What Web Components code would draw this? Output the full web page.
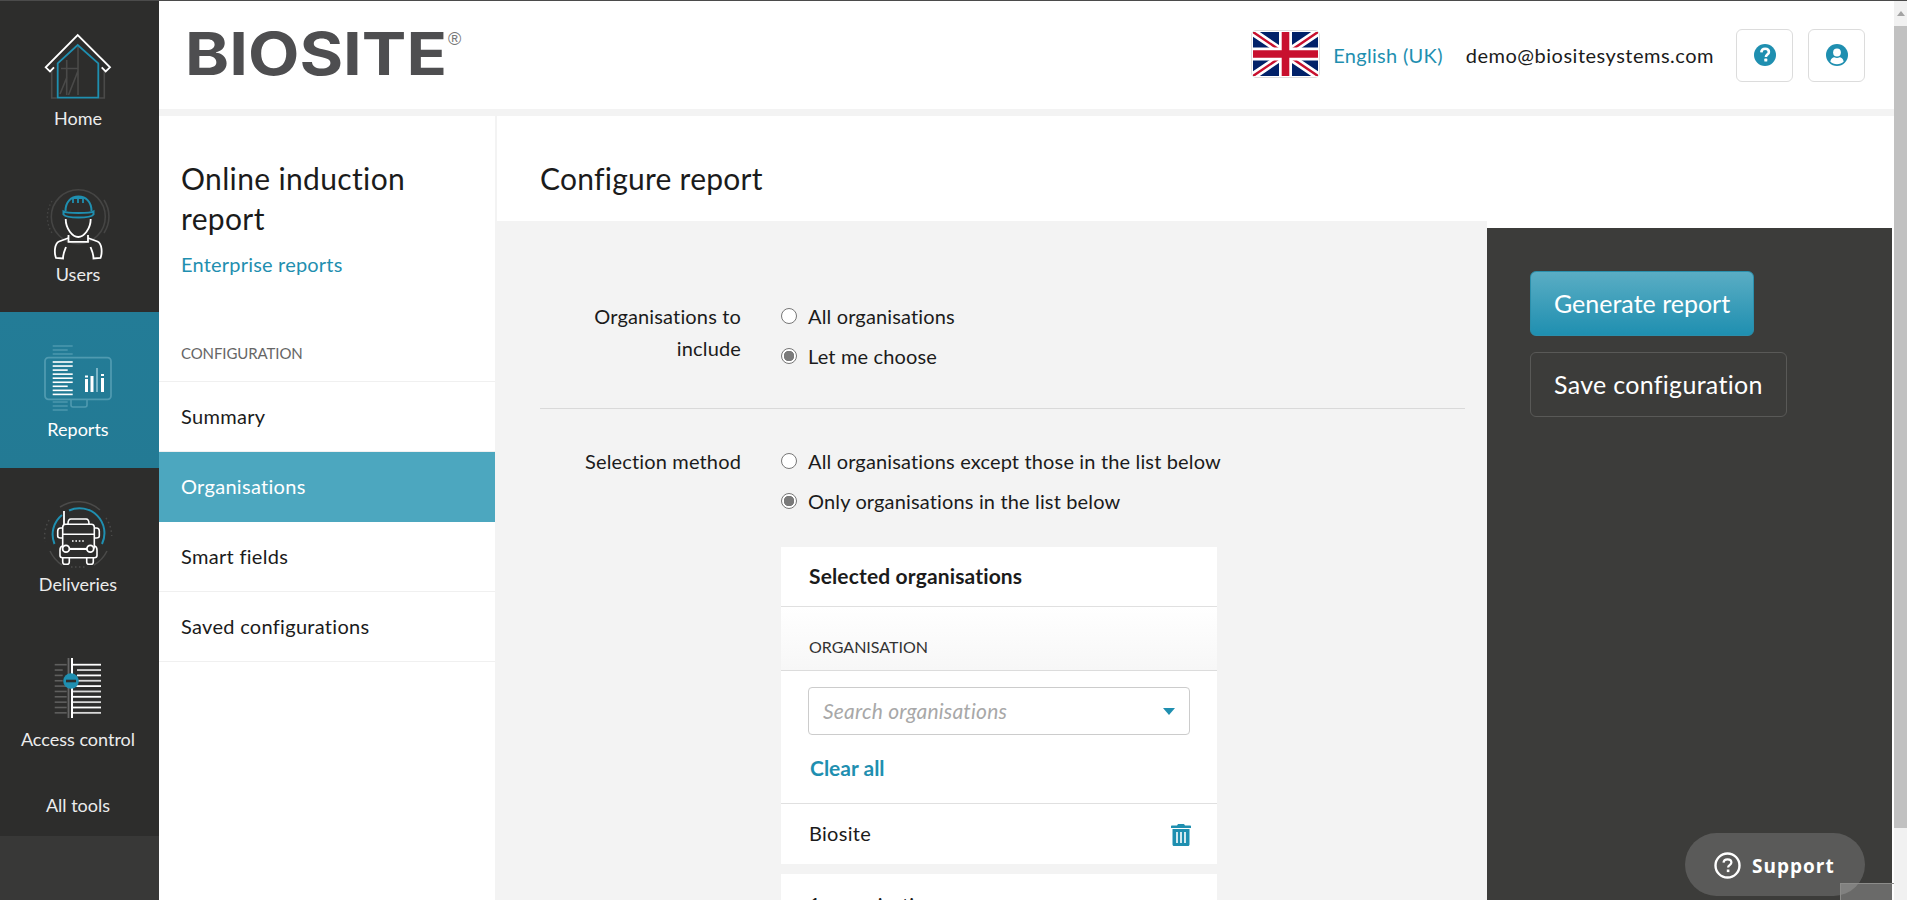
<!DOCTYPE html>
<html lang="en">
<head>
<meta charset="utf-8">
<title>Configure report</title>
<style>
  html, body { margin: 0; height: 100%; overflow: hidden; }
  body { font-family: Lato, "Noto Sans", sans-serif; color: #1b1b1b; background: #f3f3f3; }
</style>
</head>
<body>
<app-shell>
  <side-rail slot="rail">
    <rail-item label="Home" icon="home" size="155"></rail-item>
    <rail-item label="Users" icon="users"></rail-item>
    <rail-item label="Reports" icon="reports" active></rail-item>
    <rail-item label="Deliveries" icon="deliveries"></rail-item>
    <rail-item label="Access control" icon="access"></rail-item>
    <rail-item label="All tools" size="56"></rail-item>
  </side-rail>
  <top-bar slot="top"></top-bar>
  <sub-nav slot="nav" heading="Online induction report" crumb="Enterprise reports" section="CONFIGURATION">
    <nav-row>Summary</nav-row>
    <nav-row active>Organisations</nav-row>
    <nav-row>Smart fields</nav-row>
    <nav-row>Saved configurations</nav-row>
  </sub-nav>
  <page-title slot="title">Configure report</page-title>
  <config-form slot="form">
    <config-row label="Organisations to include" divided>
      <radio-option>All organisations</radio-option>
      <radio-option checked>Let me choose</radio-option>
    </config-row>
    <config-row label="Selection method">
      <radio-option>All organisations except those in the list below</radio-option>
      <radio-option checked>Only organisations in the list below</radio-option>
      <selected-panel></selected-panel>
      <count-row>1 organisation</count-row>
    </config-row>
  </config-form>
  <action-panel slot="actions">
    <action-button primary>Generate report</action-button>
    <action-button>Save configuration</action-button>
  </action-panel>
  <fake-scrollbar slot="scroll"></fake-scrollbar>
</app-shell>
<support-pill></support-pill>
<corner-box></corner-box>

<script>
const TEAL = "#1f8fb0";
const FONT_W = "#ffffff";
const range = (n, fn) => Array.from({ length: n }, (_, i) => fn(i)).join("");

const ICONS = {
  home: `
    <g fill="none" stroke="#4a4a49" stroke-width="1.6">
      <path d="M9.7 41v27h5M62.3 41v27h-5"/>
      <path d="M36 17v48M24.7 30v35M19 38.5h17M18 64l7-17M26.5 65L36 41"/>
    </g>
    <path d="M15.7 33.3L35.7 15l20.6 18.3v34.4H15.7z" fill="none" stroke="${TEAL}" stroke-width="1.8"/>
    <path d="M12 37.3L8 41.4 3.7 37.3 35.7 5 68 37.3l-4.3 4.1-4-4.1" fill="none" stroke="${FONT_W}" stroke-width="1.8"/>`,
  users: `
    <circle cx="36.3" cy="31.7" r="27" fill="none" stroke="#454544" stroke-width="1.6"/>
    <path d="M62 15a30 30 0 0 1 0 33" fill="none" stroke="#454544" stroke-width="1.6"/>
    <path d="M10 16a30 30 0 0 0 0 32" fill="none" stroke="#454544" stroke-width="1.4" stroke-dasharray="1.5 2.5"/>
    <path d="M23.5 26c0-9 5.5-14.5 13-14.5S49.500 17 49.500 26" fill="none" stroke="${TEAL}" stroke-width="2"/>
    <path d="M31 18v-5h10v5M36 13v5" fill="none" stroke="${TEAL}" stroke-width="1.8"/>
    <path d="M21.500 26.500c3 2 27 2 30 0v3c-3 4-27 4-30 0z" fill="none" stroke="${TEAL}" stroke-width="2"/>
    <g fill="none" stroke="#fff" stroke-width="1.8">
      <path d="M23.700 34c0 10 7 18 12.500 18s12.500-8 12.500-18"/>
      <path d="M26.500 50v6.800h19.500V50"/>
      <path d="M26.500 53l-9.500 3.500c-4.500 2-5 11-3 16.500l7 .5c0-5 2-9 3-11.500"/>
      <path d="M46 53l9.500 3.500c4.500 2 5 11 3 16.500l-7 .5c0-5-2-9-3-11.500"/>
    </g>`,
  reports: `
    <rect x="3" y="16.700" width="66" height="41.600" rx="3.500" fill="none" stroke="#4f9ab0" stroke-width="1.8"/>
    <path d="M29 59v5c0 1.500 1 2 2 2h12c1 0 2-.5 2-2v-5" fill="none" stroke="#4f9ab0" stroke-width="1.600"/>
    ${[5, 9, 13].map((y, i) => `<rect x="10.700" y="${y - 0.7}" width="${i == 1 ? 15 : 20}" height="1.400" fill="#4f9ab0"/>`).join("")}
    ${[61, 65, 69].map(y => `<rect x="10.700" y="${y - 0.7}" width="15" height="1.400" fill="#4f9ab0"/>`).join("")}
    ${range(9, i => `<rect x="10.700" y="${20.200 + i * 4.050}" width="${i % 2 ? 20 : (i % 4 ? 15 : 20)}" height="1.600" fill="#fff"/>`)}
    <rect x="43" y="38" width="3" height="13" fill="#fff"/><rect x="43" y="34.500" width="3" height="2" fill="#fff"/>
    <rect x="48.500" y="35" width="3" height="16" fill="#fff"/>
    <rect x="54.200" y="27" width="1.600" height="24" fill="#8fc3d3"/>
    <rect x="59" y="37" width="3" height="14" fill="#fff"/><rect x="59" y="33" width="3" height="2" fill="#fff"/>`,
  deliveries: `
    <g fill="none" stroke="#4a4a49" stroke-width="1.500">
      <path d="M18 9A33.500 33.500 0 0 1 58 12"/>
      <path d="M64 20A33.500 33.500 0 0 1 69.700 38" stroke-dasharray="1.500 3"/>
      <path d="M7 22A33.500 33.500 0 0 0 3 44" stroke-dasharray="1.500 3"/>
      <path d="M8 53A33.500 33.500 0 0 0 20 67M52 67A33.500 33.500 0 0 0 65 53"/>
      <path d="M29 69h14" stroke-dasharray="1.500 2.500"/>
    </g>
    <path d="M12.500 46A25 25 0 0 1 20 17M27 12.500A25 25 0 0 1 60 46" fill="none" stroke="${TEAL}" stroke-width="2"/>
    <g fill="none" stroke="#fff" stroke-width="1.600">
      <path d="M22 13v23" stroke-width="1.800"/>
      <path d="M26 26c0-3 1-5 3-5h15c2 0 3 2 3 5"/>
      <rect x="20.700" y="26.300" width="31.600" height="25" rx="3" fill="#2d2d2c"/>
      <path d="M20.700 36.300h31.600"/>
      <path d="M20.700 30h-2c-2 0-3 1-3 3v5c0 1.500 1 2 3 2h2M52.300 30h2c2 0 3 1 3 3v5c0 1.500-1 2-3 2h-2"/>
      <path d="M20.700 48c-2 .5-2.700 2-2.700 4v5.500c0 1.500 1 2.200 2.500 2.200h32c1.500 0 2.500-.7 2.500-2.200V52c0-2-.7-3.500-2.700-4"/>
      <circle cx="24" cy="50.700" r="3.400" fill="#2d2d2c" stroke-width="1.800"/><circle cx="48.300" cy="50.700" r="3.400" fill="#2d2d2c" stroke-width="1.800"/>
      <path d="M27.500 50.700h17.500"/>
      <path d="M20.700 60v4c0 1.300 1 2.300 2.300 2.300h2c1.300 0 2.300-1 2.300-2.300v-4M44.700 60v4c0 1.300 1 2.300 2.300 2.300h2c1.300 0 2.300-1 2.300-2.300v-4"/>
    </g>
    <path d="M30 43h13" stroke="#fff" stroke-width="1.500" stroke-dasharray="1.600 1.800" fill="none"/>`,
  access: `
    <rect x="25.600" y="7" width="1.800" height="60" fill="#666"/>
    <rect x="29" y="7" width="2" height="60" fill="#fff"/>
    ${range(10, i => {
      const y = 13.700 + i * 5.350;
      const nearDot = i > 0 && i < 4;
      return `<rect x="12.700" y="${y - 0.8}" width="${nearDot ? 8 : 12}" height="1.600" fill="#5f5f5e"/>
        <rect x="${nearDot ? 35 : 31}" y="${y - 0.9}" width="${nearDot ? 24 : 28}" height="1.800" fill="${i % 2 ? "#d8d8d8" : "#fff"}"/>`;
    })}
    <circle cx="29" cy="30" r="7.800" fill="${TEAL}"/>
    <rect x="24" y="28.700" width="10" height="2.600" fill="#2d2d2c"/>`
};

class AppShell extends HTMLElement {
  constructor() {
    super();
    this.attachShadow({ mode: "open" });
    this.shadowRoot.innerHTML = `
    <style>
      :host {
        display: grid;
        grid-template-columns: 159px minmax(0, 1fr) 13px;
        height: 900px;
        box-sizing: border-box;
        border-top: 1px solid #4b4b4b;
        overflow: hidden;
      }
      .content {
        display: grid;
        grid-template-rows: 108px minmax(0, 1fr);
        row-gap: 7px;
        background: #f3f3f3;
        min-height: 0;
      }
      .lower {
        display: grid;
        grid-template-columns: 336px minmax(0, 1fr);
        column-gap: 2px;
        min-height: 0;
      }
      .main {
        display: grid;
        grid-template-rows: 105px minmax(0, 1fr);
        min-height: 0;
      }
      .work {
        display: grid;
        grid-template-columns: 990px 405px;
        background: linear-gradient(#f3f3f3, #f3f3f3) left/990px 100% no-repeat, #fff;
        min-height: 0;
        overflow: hidden;
      }
    </style>
    <slot name="rail"></slot>
    <div class="content">
      <slot name="top"></slot>
      <div class="lower">
        <slot name="nav"></slot>
        <div class="main">
          <slot name="title"></slot>
          <div class="work">
            <slot name="form"></slot>
            <slot name="actions"></slot>
          </div>
        </div>
      </div>
    </div>
    <slot name="scroll"></slot>
    `;
  }
}

class SideRail extends HTMLElement {
  constructor() {
    super();
    this.attachShadow({ mode: "open" });
    this.shadowRoot.innerHTML = `
    <style>
      :host { display: block; background: #383837; height: 100%; }
      .items { display: flex; flex-direction: column; background: #2d2d2c; }
    </style>
    <div class="items"><slot></slot></div>
    `;
  }
}

class RailItem extends HTMLElement {
  constructor() {
    super();
    const icon = this.getAttribute("icon");
    const size = this.getAttribute("size") || 156;
    const tops = { home: 29, users: 29, reports: 29, deliveries: 30, access: 27 };
    const gaps = { home: 0, users: 1, reports: 0, deliveries: -2, access: 0 };
    const art = icon ? `<svg width="72" height="76" viewBox="0 0 72 76">${ICONS[icon]}</svg>` : "";
    this.attachShadow({ mode: "open" });
    this.shadowRoot.innerHTML = `
    <style>
      :host {
        display: flex;
        flex-direction: column;
        align-items: center;
        height: ${size}px;
        padding: ${icon ? tops[icon] : 13}px 3px 0 0;
        box-sizing: border-box;
        color: #ececec;
        font-size: 18px;
      }
      :host([active]) { background: linear-gradient(#237c97, #237a94); color: #fff; }
      svg { display: block; height: 76px; }
      span { display: block; line-height: 24px; white-space: nowrap; margin-top: ${icon ? gaps[icon] : 0}px; }
    </style>
    ${art}
    <span>${this.getAttribute("label")}</span>
    `;
  }
}

class TopBar extends HTMLElement {
  constructor() {
    super();
    this.attachShadow({ mode: "open" });
    this.shadowRoot.innerHTML = `
    <style>
      :host {
        display: flex;
        align-items: center;
        background: #fff;
        padding: 0 29px;
        font-size: 20px;
      }
      .logo { display: block; margin-right: auto; overflow: visible; }
      .flag {
        display: block;
        width: 69px;
        height: 48px;
        box-sizing: border-box;
        border: 1px solid #ddd;
        border-radius: 5px;
        padding: 1px;
        margin-right: 13px;
        margin-top: -2px;
      }
      .flag svg { display: block; width: 100%; height: 100%; }
      .lang { color: ${TEAL}; margin-right: 23px; letter-spacing: .3px; }
      .mail { margin-right: 22px; letter-spacing: .5px; }
      .square {
        display: grid;
        place-items: center;
        width: 57px;
        height: 53px;
        box-sizing: border-box;
        border: 1px solid #dcdcdc;
        border-radius: 6px;
      }
      .square + .square { margin-left: 15px; }
    </style>
    <svg class="logo" width="285" height="60" viewBox="0 0 285 60">
      <text x="-3" y="50" font-family="Inter" font-weight="700" font-size="59" fill="#4e4e50" textLength="262" lengthAdjust="spacingAndGlyphs">BIOSITE</text>
      <text x="260" y="20" font-family="Liberation Sans" font-size="18" fill="#777">®</text>
    </svg>
    <span class="flag">
      <svg viewBox="0 0 60 40" preserveAspectRatio="none">
        <rect width="60" height="40" fill="#012169"/>
        <path d="M0 0L60 40M60 0L0 40" stroke="#fff" stroke-width="7"/>
        <path d="M0 0L60 40M60 0L0 40" stroke="#c8102e" stroke-width="2.200"/>
        <path d="M30 0v40M0 20h60" stroke="#fff" stroke-width="12"/>
        <path d="M30 0v40M0 20h60" stroke="#c8102e" stroke-width="7"/>
      </svg>
    </span>
    <span class="lang">English (UK)</span>
    <span class="mail">demo@biositesystems.com</span>
    <span class="square">
      <svg width="22" height="22" viewBox="0 0 22 22">
        <circle cx="11" cy="11" r="11" fill="${TEAL}"/>
        <path d="M7.300 8.300C7.500 5.900 9.100 4.700 11.100 4.700c2.200 0 3.800 1.300 3.800 3.200 0 2.600-3 2.700-3 5" fill="none" stroke="#fff" stroke-width="2.600"/>
        <rect x="10.300" y="14.600" width="3" height="3" rx=".6" fill="#fff"/>
      </svg>
    </span>
    <span class="square">
      <svg width="22" height="22" viewBox="0 0 22 22">
        <circle cx="11" cy="11" r="11" fill="${TEAL}"/>
        <circle cx="11" cy="8.500" r="3.900" fill="#fff"/>
        <path d="M4.300 17.400c.6-3 2.700-4.200 4-4.200 1 .5 1.800.8 2.700.8s1.700-.3 2.700-.8c1.300 0 3.400 1.200 4 4.200-1.600 1.700-4 2.800-6.700 2.800s-5.100-1.100-6.700-2.800z" fill="#fff"/>
      </svg>
    </span>
    `;
  }
}

class SubNav extends HTMLElement {
  constructor() {
    super();
    this.attachShadow({ mode: "open" });
    this.shadowRoot.innerHTML = `
    <style>
      :host { display: block; background: #fff; }
      .head { padding: 42px 22px 0; height: 222px; box-sizing: border-box; }
      h1 { margin: 0; font-size: 30px; font-weight: 400; line-height: 40px; letter-spacing: .35px; }
      .crumb { color: ${TEAL}; font-size: 20px; line-height: 28px; margin-top: 12px; letter-spacing: .2px; }
      .section {
        color: #666;
        font-size: 15px;
        letter-spacing: -.1px;
        line-height: 20px;
        padding: 48px 22px 0;
        height: 38px;
        margin-top: -43px;
        position: relative;
      }
      .rows { border-top: 1px solid #f0f0f0; }
    </style>
    <div class="head">
      <h1>${this.getAttribute("heading")}</h1>
      <div class="crumb">${this.getAttribute("crumb")}</div>
    </div>
    <div class="section">${this.getAttribute("section")}</div>
    <div class="rows"><slot></slot></div>
    `;
  }
}

class NavRow extends HTMLElement {
  constructor() {
    super();
    this.attachShadow({ mode: "open" });
    this.shadowRoot.innerHTML = `
    <style>
      :host {
        display: flex;
        align-items: center;
        height: 70px;
        box-sizing: border-box;
        padding: 0 22px 2px;
        font-size: 20px;
        letter-spacing: .3px;
        border-bottom: 1px solid #f0f0f0;
      }
      :host([active]) { background: #4ca7bf; color: #fff; border-bottom-color: #4ca7bf; }
    </style>
    <slot></slot>
    `;
  }
}

class PageTitle extends HTMLElement {
  constructor() {
    super();
    this.attachShadow({ mode: "open" });
    this.shadowRoot.innerHTML = `
    <style>
      :host {
        display: flex;
        align-items: center;
        background: #fff;
        padding: 19px 43px 0;
        font-size: 30px;
        letter-spacing: .25px;
      }
    </style>
    <slot></slot>
    `;
  }
}

class ConfigForm extends HTMLElement {
  constructor() {
    super();
    this.attachShadow({ mode: "open" });
    this.shadowRoot.innerHTML = `
    <style>
      :host { display: block; padding: 75px 22px 0 43px; overflow: hidden; }
    </style>
    <slot></slot>
    `;
  }
}

class ConfigRow extends HTMLElement {
  constructor() {
    super();
    this.attachShadow({ mode: "open" });
    this.shadowRoot.innerHTML = `
    <style>
      :host {
        display: grid;
        grid-template-columns: 201px 436px;
        column-gap: 40px;
        font-size: 20px;
        letter-spacing: .15px;
      }
      :host([divided]) { border-bottom: 1px solid #d9d9d9; padding-bottom: 32px; margin-bottom: 32px; }
      .label { text-align: right; line-height: 32px; padding-top: 4px; }
    </style>
    <div class="label">${this.getAttribute("label")}</div>
    <div><slot></slot></div>
    `;
  }
}

class RadioOption extends HTMLElement {
  constructor() {
    super();
    this.attachShadow({ mode: "open" });
    this.shadowRoot.innerHTML = `
    <style>
      :host { display: flex; align-items: center; height: 40px; white-space: nowrap; }
      .dot {
        width: 16px;
        height: 16px;
        box-sizing: border-box;
        border: 1px solid #767676;
        border-radius: 50%;
        background: #fff;
        margin-right: 11px;
        flex: none;
      }
      .text { padding-bottom: 1px; }
      :host([checked]) .dot { background: radial-gradient(circle, #7a7a7a 0 5px, #fff 5.500px); }
    </style>
    <span class="dot"></span><span class="text"><slot></slot></span>
    `;
  }
}

class SelectedPanel extends HTMLElement {
  constructor() {
    super();
    this.attachShadow({ mode: "open" });
    this.shadowRoot.innerHTML = `
    <style>
      :host { display: block; background: #fff; margin-top: 26px; }
      .head { height: 60px; box-sizing: border-box; border-bottom: 1px solid #e0e0e0; padding: 0 28px 2px; display: flex; align-items: center; font-weight: 700; font-size: 21px; letter-spacing: .15px; }
      .col {
        height: 64px;
        box-sizing: border-box;
        border-bottom: 1px solid #dcdcdc;
        background: linear-gradient(#fff, #f7f7f7);
        padding: 30px 28px 0;
        font-size: 16px;
        letter-spacing: 0;
        line-height: 20px;
        color: #333;
      }
      .body { height: 133px; box-sizing: border-box; border-bottom: 1px solid #e0e0e0; padding: 16px 27px 0; }
      .search {
        display: flex;
        align-items: center;
        justify-content: space-between;
        height: 48px;
        width: 382px;
        box-sizing: border-box;
        border: 1px solid #ccc;
        border-radius: 4px;
        padding: 0 14px 1px;
        color: #a8a8a8;
        font-style: italic;
        font-size: 21px;
        letter-spacing: .2px;
      }
      .arrow { width: 0; height: 0; border: 6.500px solid transparent; border-top: 7px solid ${TEAL}; border-bottom: 0; margin-top: 1px; }
      .clear { color: ${TEAL}; font-weight: 700; font-size: 21px; letter-spacing: 0; line-height: 28px; margin: 19px 0 0 2px; }
      .item { height: 60px; display: flex; align-items: center; justify-content: space-between; padding: 0 26px 0 28px; font-size: 20px; letter-spacing: .3px; }
      .item svg { margin-top: 2px; }
      .name { padding-bottom: 2px; }
    </style>
    <div class="head">Selected organisations</div>
    <div class="col">ORGANISATION</div>
    <div class="body">
      <div class="search">Search organisations<span class="arrow"></span></div>
      <div class="clear">Clear all</div>
    </div>
    <div class="item"><span class="name">Biosite</span>
      <svg width="20" height="22" viewBox="0 0 20 22">
        <path d="M7 0h6l1 1.500h5c.6 0 1 .4 1 1V4H0V2.500c0-.6.400-1 1-1h5z" fill="${TEAL}"/>
        <path d="M1.500 5h17v15.500c0 .9-.6 1.500-1.500 1.500H3c-.9 0-1.500-.6-1.500-1.500z" fill="${TEAL}"/>
        <path d="M6 8v11M10 8v11M14 8v11" stroke="#fff" stroke-width="1.600"/>
      </svg>
    </div>
    `;
  }
}

class CountRow extends HTMLElement {
  constructor() {
    super();
    this.attachShadow({ mode: "open" });
    this.shadowRoot.innerHTML = `
    <style>
      :host { display: flex; align-items: center; height: 60px; margin-top: 10px; background: #fff; padding: 0 28px; font-size: 20px; letter-spacing: .3px; }
    </style>
    <slot></slot>
    `;
  }
}

class ActionPanel extends HTMLElement {
  constructor() {
    super();
    this.attachShadow({ mode: "open" });
    this.shadowRoot.innerHTML = `
    <style>
      :host {
        display: flex;
        flex-direction: column;
        align-items: flex-start;
        gap: 16px;
        background: #3c3c3a;
        margin-top: 7px;
        padding: 43px 43px 36px;
      }
    </style>
    <slot></slot>
    `;
  }
}

class ActionButton extends HTMLElement {
  constructor() {
    super();
    this.attachShadow({ mode: "open" });
    this.shadowRoot.innerHTML = `
    <style>
      :host {
        display: flex;
        align-items: center;
        height: 65px;
        box-sizing: border-box;
        padding: 0 23px 2px;
        border: 1px solid #595957;
        border-radius: 6px;
        color: #fff;
        font-size: 25px;
        letter-spacing: .3px;
        white-space: nowrap;
      }
      :host([primary]) { background: linear-gradient(#5aadc4, #1f8fb0); border-color: #2a8fac; letter-spacing: 0; }
    </style>
    <slot></slot>
    `;
  }
}

class FakeScrollbar extends HTMLElement {
  constructor() {
    super();
    this.attachShadow({ mode: "open" });
    this.shadowRoot.innerHTML = `
    <style>
      :host { display: block; background: #f1f1f1; position: relative; }
      .up { width: 0; height: 0; border: 4px solid transparent; border-bottom: 5px solid #a3a3a3; border-top: 0; margin: 10px auto 0; }
      .thumb { position: absolute; top: 25px; left: 0; right: 0; height: 802px; background: #c1c1c1; }
    </style>
    <div class="up"></div><div class="thumb"></div>
    `;
  }
}

class SupportPill extends HTMLElement {
  constructor() {
    super();
    this.attachShadow({ mode: "open" });
    this.shadowRoot.innerHTML = `
    <style>
      :host {
        position: fixed;
        left: 1685px;
        top: 833px;
        width: 180px;
        height: 63px;
        display: flex;
        align-items: center;
        gap: 11px;
        box-sizing: border-box;
        padding-left: 29px;
        border-radius: 32px;
        background: #5a5a59;
        color: #fff;
        font-family: "Open Sans", sans-serif;
        font-weight: 700;
        font-size: 19px;
        letter-spacing: 1px;
      }
      svg { margin-top: 1px; }
      span { padding-top: 2px; }
    </style>
    <svg width="27" height="27" viewBox="0 0 27 27">
      <circle cx="13.500" cy="13.500" r="12" fill="none" stroke="#fff" stroke-width="2.400"/>
      <path d="M9.500 10.700c.2-2.200 1.800-3.400 4-3.400s3.900 1.300 3.900 3.200c0 2.600-3.300 2.700-3.300 5" fill="none" stroke="#fff" stroke-width="2.200"/>
      <rect x="12.800" y="17.500" width="2.600" height="2.600" fill="#fff"/>
    </svg>
    <span>Support</span>
    `;
  }
}

class CornerBox extends HTMLElement {
  constructor() {
    super();
    this.attachShadow({ mode: "open" });
    this.shadowRoot.innerHTML = `
    <style>
      :host {
        position: fixed;
        left: 1840px;
        top: 883px;
        width: 54px;
        height: 17px;
        box-sizing: border-box;
        background: rgba(255,255,255,.24);
        border: 1px solid #8c8c8a;
        border-width: 1px 0 0 1px;
      }
    </style>
    `;
  }
}

customElements.define("app-shell", AppShell);
customElements.define("side-rail", SideRail);
customElements.define("rail-item", RailItem);
customElements.define("top-bar", TopBar);
customElements.define("sub-nav", SubNav);
customElements.define("nav-row", NavRow);
customElements.define("page-title", PageTitle);
customElements.define("config-form", ConfigForm);
customElements.define("config-row", ConfigRow);
customElements.define("radio-option", RadioOption);
customElements.define("selected-panel", SelectedPanel);
customElements.define("count-row", CountRow);
customElements.define("action-panel", ActionPanel);
customElements.define("action-button", ActionButton);
customElements.define("fake-scrollbar", FakeScrollbar);
customElements.define("support-pill", SupportPill);
customElements.define("corner-box", CornerBox);
</script>
</body>
</html>
